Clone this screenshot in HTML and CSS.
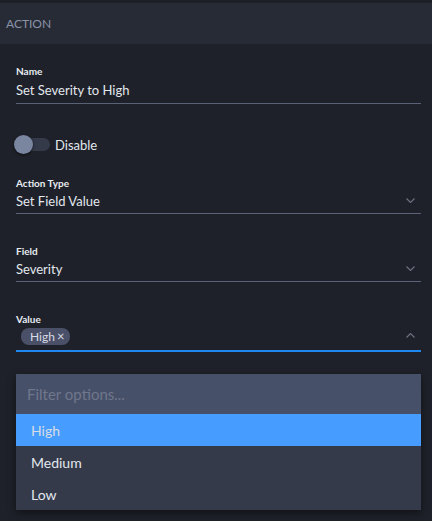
FILE: index.html
```html
<!DOCTYPE html>
<html>
<head>
<meta charset="utf-8">
<link rel="stylesheet" href="styles.css">
</head>
<body>
<div class="panel">
  <div class="header">ACTION</div>
  <div class="body">
    <div class="field">
      <div class="label">Name</div>
      <div class="input">Set Severity to High</div>
    </div>
    <div class="toggle-row">
      <div class="toggle"><span class="knob"></span></div>
      <span class="toggle-label">Disable</span>
    </div>
    <div class="field">
      <div class="label">Action Type</div>
      <div class="input select">Set Field Value
        <svg class="chev" width="9" height="5" viewBox="0 0 9 5"><path d="M0.5 0.5l4 4 4-4" fill="none" stroke="#6e7383" stroke-width="1.1"/></svg>
      </div>
    </div>
    <div class="field">
      <div class="label">Field</div>
      <div class="input select">Severity
        <svg class="chev" width="9" height="5" viewBox="0 0 9 5"><path d="M0.5 0.5l4 4 4-4" fill="none" stroke="#6e7383" stroke-width="1.1"/></svg>
      </div>
    </div>
    <div class="field">
      <div class="label">Value</div>
      <div class="input select active">
        <span class="chip">High<span class="x">×</span></span>
        <svg class="chev" width="9" height="5" viewBox="0 0 9 5"><path d="M0.5 4.5l4-4 4 4" fill="none" stroke="#6e7383" stroke-width="1.1"/></svg>
      </div>
    </div>
    <div class="dropdown">
      <div class="filter">Filter options...</div>
      <div class="option selected">High</div>
      <div class="option">Medium</div>
      <div class="option">Low</div>
    </div>
  </div>
</div>
</body>
</html>
```

FILE: styles.css
```css
* { box-sizing: border-box; }
html, body { margin: 0; padding: 0; }
body {
  background: #1c1f26;
  font-family: "Lato", "Noto Sans", sans-serif;
  color: #e3e7ee;
  width: 432px;
  height: 521px;
  overflow: hidden;
}
.panel {
  padding-top: 3px;
  background: #1c1f26;
}
.header {
  height: 41px;
  background: #272b35;
  color: #8a93a8;
  font-size: 12px;
  padding-left: 6px;
  display: flex;
  align-items: center;
}
.body {
  background: #1e2129;
  padding: 20px 11px 11px 16px;
  height: 477px;
}
.field {
  display: flex;
  flex-direction: column;
}
.label {
  font-size: 10px;
  font-weight: bold;
  color: #e8ecf2;
  height: 14px;
  line-height: 14px;
}
.input {
  height: 26px;
  font-size: 13px;
  line-height: 20px;
  padding-top: 2px;
  border-bottom: 1px solid #5a6278;
  color: #e3e7ee;
  display: flex;
  align-items: flex-start;
}
.select {
  position: relative;
  height: 24px;
  padding-top: 1px;
}
.chev {
  position: absolute;
  right: 6px;
  top: 8px;
}
.input.active {
  border-bottom: 2px solid #1e88f0;
  height: 26px;
  padding-top: 2px;
  padding-left: 5px;
}
.active .chev { top: 7px; }
.chip {
  background: #4a5068;
  color: #d8dce4;
  font-size: 12px;
  border-radius: 8px;
  height: 17px;
  line-height: 17px;
  padding: 0 6px 0 9px;
}
.chip .x { font-size: 13px; margin-left: 2px; }
.toggle-row {
  display: flex;
  align-items: center;
  height: 19px;
  margin-top: 31px;
  margin-left: -2px;
  margin-bottom: 22px;
}
.toggle {
  position: relative;
  width: 36px;
  height: 13px;
  background: #343a4a;
  border-radius: 7px;
  margin-right: 5px;
}
.knob {
  position: absolute;
  left: 0;
  top: -3px;
  width: 19px;
  height: 19px;
  border-radius: 50%;
  background: #7a85a0;
  box-shadow: 0 1px 3px rgba(0,0,0,0.6);
}
.toggle-label { font-size: 13px; }
.field + .field { margin-top: 30px; }
.dropdown {
  margin-top: 22px;
  width: 405px;
  background: #343a4a;
  box-shadow: 0 3px 8px rgba(0,0,0,0.45);
}
.filter {
  height: 40px;
  background: #475069;
  color: #6f778c;
  font-size: 15px;
  padding-left: 11px;
  display: flex;
  align-items: center;
}
.option {
  height: 32px;
  font-size: 14px;
  padding-left: 15px;
  display: flex;
  align-items: center;
  color: #e3e7ee;
}
.option.selected {
  background: #479dff;
  color: #d8dce4;
}
```
